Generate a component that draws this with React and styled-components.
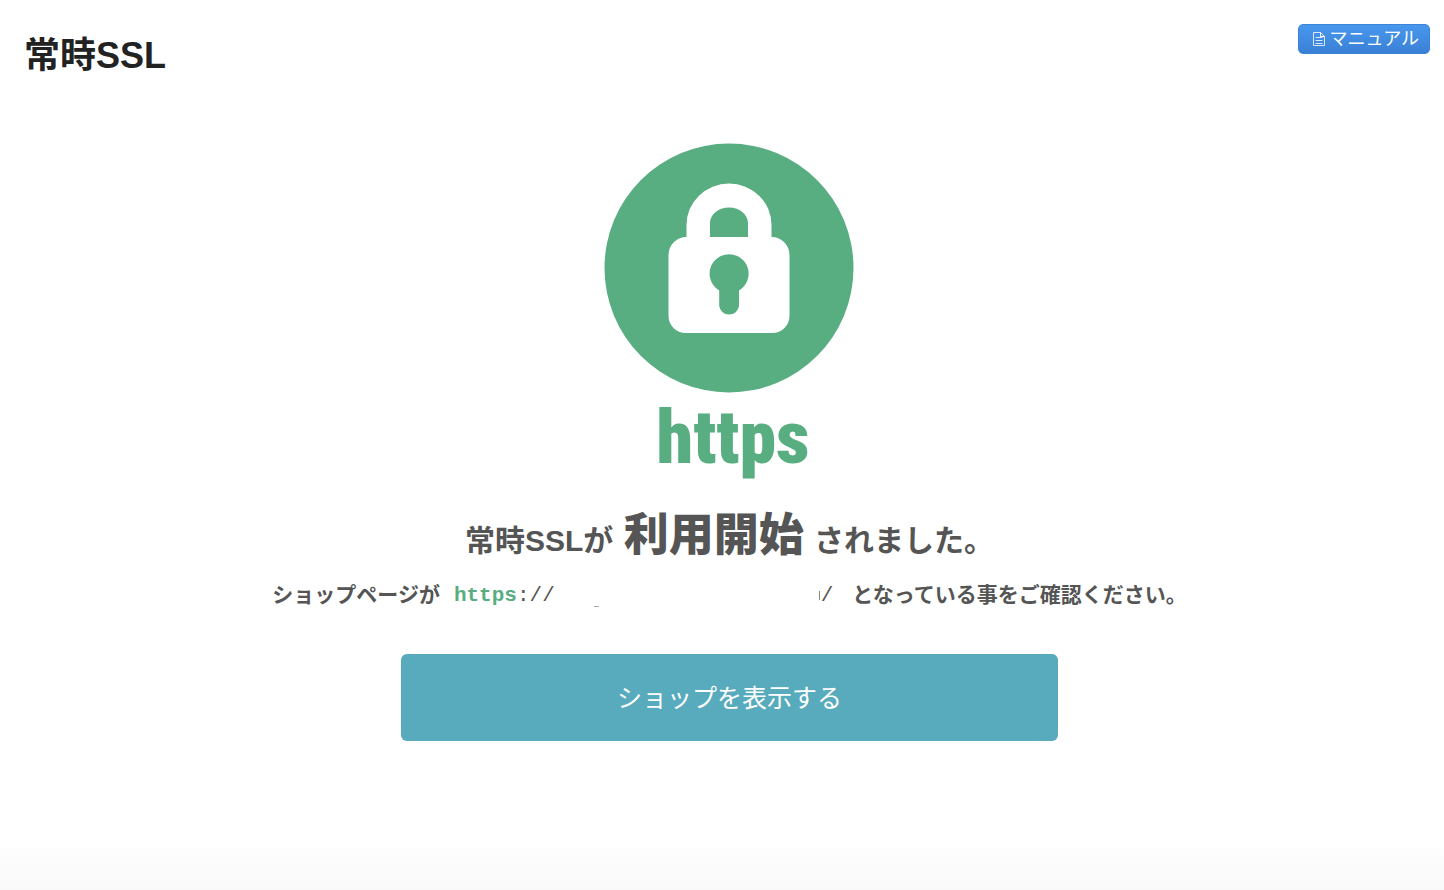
import styled, { createGlobalStyle } from "styled-components";

const GlobalStyle = createGlobalStyle`
  *,
  *::before,
  *::after {
    box-sizing: border-box;
  }

  body {
    margin: 0;
    font-family: "Liberation Sans", "Noto Sans CJK JP", sans-serif;
    color: #555;
    background-color: #fff;
  }

  h1,
  h2,
  p {
    margin: 0;
  }
`;

const Page = styled.div`
  display: flex;
  flex-direction: column;
  min-height: 100vh;
  padding-left: 15px;
`;

const Header = styled.header`
  display: flex;
  justify-content: space-between;
  align-items: flex-start;
  padding: 24px 14px 0 9px;
`;

const Title = styled.h1`
  padding-top: 8px;
  font-size: 36px;
  line-height: 48px;
  font-weight: 700;
  color: #222;
`;

const ManualButton = styled.button`
  display: flex;
  align-items: center;
  gap: 5px;
  height: 30px;
  padding: 0 10px 0 14px;
  border: 1px solid #3d83d6;
  border-radius: 5px;
  background: linear-gradient(#4898ee, #3a80d5);
  color: #fff;
  font-family: inherit;
  font-size: 18px;
  line-height: 26px;
  cursor: pointer;
`;

const Main = styled.main`
  flex: 1;
  display: flex;
  flex-direction: column;
  align-items: center;
  padding-top: 63px;
  text-align: center;
`;

const LockIcon = styled.svg`
  display: block;
  width: 252px;
  height: 250px;
`;

const Protocol = styled.p`
  padding-left: 7px;
  font-family: "Liberation Sans Narrow", "Roboto Condensed", "Liberation Sans",
    sans-serif;
  font-size: 74px;
  line-height: 90px;
  font-weight: 900;
  color: #58ae80;
`;

const Message = styled.h2`
  margin-top: 20px;
  font-size: 30px;
  line-height: 66px;
  font-weight: 700;
  white-space: pre-wrap;
`;

const Strong = styled.strong`
  margin: 0 2px;
  font-size: 45px;
`;

const Note = styled.p`
  display: flex;
  align-items: center;
  justify-content: center;
  flex-wrap: wrap;
  column-gap: 14px;
  margin-top: 2px;
  font-size: 21px;
  line-height: 36px;
  font-weight: 700;
`;

const Url = styled.span`
  display: flex;
  align-items: center;
  padding-top: 2px;
  padding-right: 5px;
  font-family: "Liberation Mono", monospace;
  font-weight: 400;
`;

const Scheme = styled.span`
  font-weight: 700;
  color: #58ae80;
`;

const HiddenHost = styled.svg`
  width: 266px;
  height: 24px;
`;

const ShopButton = styled.button`
  width: 46%;
  height: 87px;
  margin-top: 40px;
  border: none;
  border-radius: 6px;
  background-color: #57abbd;
  color: #fff;
  font-family: inherit;
  font-size: 25px;
  line-height: 36px;
  cursor: pointer;
`;

const Footer = styled.footer`
  height: 50px;
  margin-left: -15px;
  background: linear-gradient(#fff, #f9f9f9);
`;

function DocumentIcon() {
  return (
    <svg width="12" height="16" viewBox="0 0 12 16" fill="none" stroke="#fff">
      <path d="M.5 1.5h7l4 4v9H.5z" strokeOpacity=".8" />
      <path d="M7.5 1.5v4h4" />
      <path d="M2.5 6.5h7M2.5 9.5h7M2.5 12.5h7" strokeOpacity=".8" />
    </svg>
  );
}

function Lock() {
  return (
    <LockIcon viewBox="0 0 252 250" aria-hidden="true">
      <circle cx="125" cy="125" r="124.5" fill="#58ae80" />
      <path
        fill="#fff"
        fillRule="evenodd"
        d="M82.500 94V82a42.500 41.500 0 0 1 85 0v12a18 18 0 0 1 18 18v61a17 17 0 0 1-17 17h-87a17 17 0 0 1-17-17v-61a18 18 0 0 1 18-18zM106 94h38V80c0-8-8-15.500-19-15.500s-19 7.500-19 15.500z"
      />
      <path
        fill="#58ae80"
        d="M115.200 147.500a19.500 19.500 0 1 1 19.800 0V163a10 10 0 0 1-19.800 0z"
      />
    </LockIcon>
  );
}

function App() {
  return (
    <>
      <GlobalStyle />
      <Page>
        <Header>
          <Title>常時SSL</Title>
          <ManualButton type="button">
            <DocumentIcon />
            マニュアル
          </ManualButton>
        </Header>

        <Main>
          <Lock />
          <Protocol>https</Protocol>
          <Message>
            常時SSLが <Strong>利用開始</Strong> されました。
          </Message>
          <Note>
            <span>ショップページが</span>
            <Url>
              <Scheme>https</Scheme>
              ://
              <HiddenHost viewBox="0 0 266 24" aria-hidden="true">
                <path d="M39 22.500h5" stroke="#aaa" />
                <path d="M264.500 7v9" stroke="#888" />
              </HiddenHost>
              /
            </Url>
            <span>となっている事をご確認ください。</span>
          </Note>
          <ShopButton type="button">ショップを表示する</ShopButton>
        </Main>

        <Footer />
      </Page>
    </>
  );
}

export default App;
